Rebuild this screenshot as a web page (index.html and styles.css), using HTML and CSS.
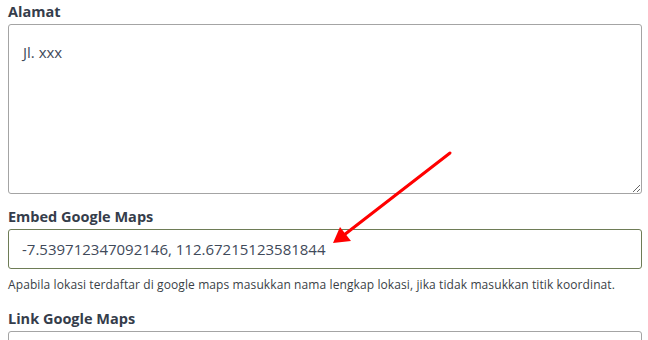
FILE: index.html
```html
<!DOCTYPE html>
<html lang="id">
<head>
<meta charset="utf-8">
<title>Form Lokasi</title>
<link rel="stylesheet" href="styles.css">
</head>
<body>
<form class="form">
  <div class="group">
    <label class="label" for="alamat">Alamat</label>
    <textarea id="alamat" class="field area">Jl. xxx</textarea>
  </div>
  <div class="group">
    <label class="label" for="embed">Embed Google Maps</label>
    <div class="field input focus" id="embed">-7.539712347092146, 112.67215123581844</div>
    <p class="help">Apabila lokasi terdaftar di google maps masukkan nama lengkap lokasi, jika tidak masukkan titik koordinat.</p>
  </div>
  <div class="group">
    <label class="label" for="link">Link Google Maps</label>
    <div class="field input" id="link"></div>
  </div>
</form>
<svg class="arrow" width="648" height="340" viewBox="0 0 648 340">
  <line x1="450" y1="153" x2="344" y2="235" stroke="#ff0000" stroke-width="3" stroke-linecap="round"/>
  <polygon points="333,243 340,227 351,241" fill="#ff0000"/>
</svg>
</body>
</html>
```
FILE: styles.css
```css
html, body {
  margin: 0;
  padding: 0;
  background: #ffffff;
  overflow: hidden;
}
body {
  width: 648px;
  height: 340px;
  position: relative;
  font-family: "Open Sans", "Noto Sans", sans-serif;
}
.form {
  padding: 3px 6px 0 8px;
}
.group {
  margin-bottom: 14px;
}
.label {
  display: block;
  font-size: 14.5px;
  font-weight: 700;
  color: #353d4b;
  line-height: 18px;
  margin-bottom: 3px;
}
.field {
  box-sizing: border-box;
  display: block;
  width: 634px;
  border: 1px solid #a4a4a4;
  border-radius: 3px;
  background: #fff;
  font-family: "Open Sans", "Noto Sans", sans-serif;
  color: #3f4a5a;
}
.area {
  height: 170px;
  padding: 17px 14px 10px;
  font-size: 15px;
  line-height: 20px;
  resize: vertical;
  margin: 0;
}
.input {
  height: 40px;
  padding: 0 13px;
  font-size: 15px;
  line-height: 38px;
}
.focus {
  border-color: #6e7c56;
}
.help {
  margin: 8px 0 0 0;
  padding-bottom: 3px;
  font-size: 12px;
  line-height: 16px;
  color: #3a3f47;
  letter-spacing: 0.1px;
}
.arrow {
  position: absolute;
  left: 0;
  top: 0;
  pointer-events: none;
}
```
